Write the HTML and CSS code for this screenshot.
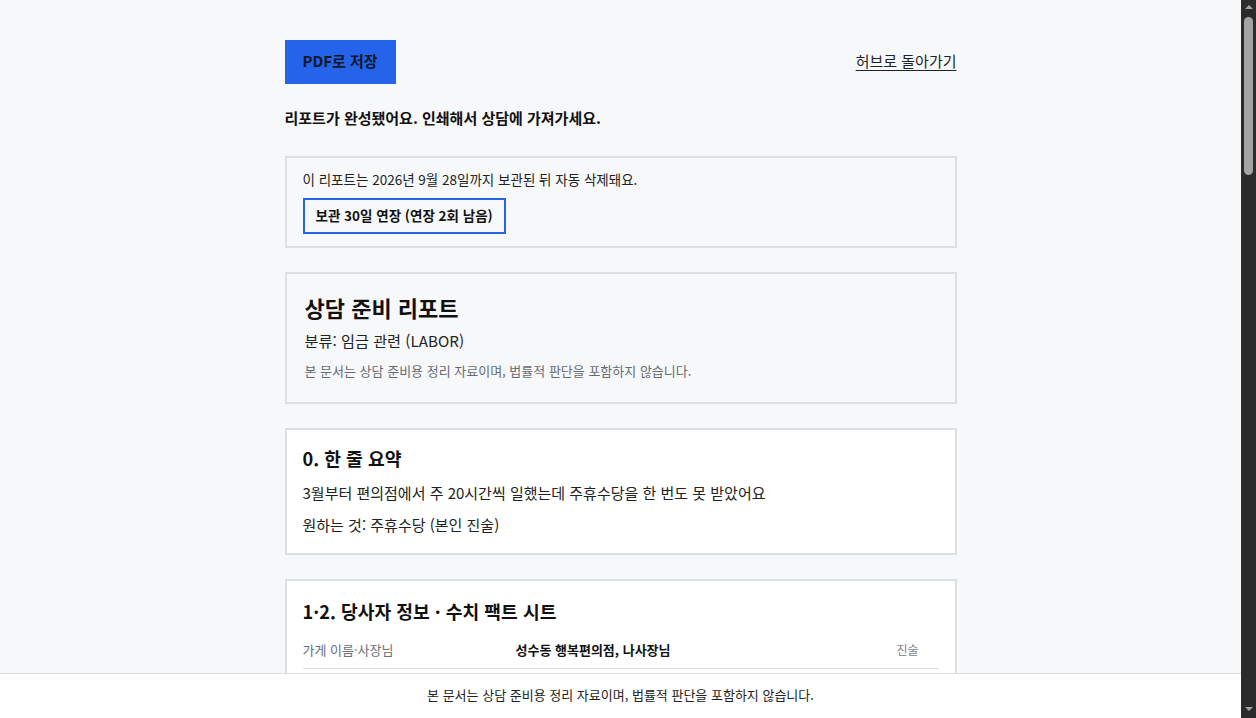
FILE: index.html
```html
<!DOCTYPE html>
<html lang="ko">
<head>
<meta charset="utf-8">
<title>상담 준비 리포트</title>
<link rel="stylesheet" href="styles.css">
</head>
<body>
<main class="page">
  <div class="topbar">
    <button class="btn-primary" type="button">PDF로 저장</button>
    <a class="back-link" href="#">허브로 돌아가기</a>
  </div>

  <p class="done-msg">리포트가 완성됐어요. 인쇄해서 상담에 가져가세요.</p>

  <section class="notice">
    <p class="notice-text">이 리포트는 2026년 9월 28일까지 보관된 뒤 자동 삭제돼요.</p>
    <button class="btn-outline" type="button">보관 30일 연장 (연장 2회 남음)</button>
  </section>

  <section class="card card-head">
    <h1 class="report-title">상담 준비 리포트</h1>
    <p class="report-cat">분류: 임금 관련 (LABOR)</p>
    <p class="report-note">본 문서는 상담 준비용 정리 자료이며, 법률적 판단을 포함하지 않습니다.</p>
  </section>

  <section class="card card-white card-summary">
    <h2 class="sec-title">0. 한 줄 요약</h2>
    <div class="sec-body">
      <p>3월부터 편의점에서 주 20시간씩 일했는데 주휴수당을 한 번도 못 받았어요</p>
      <p>원하는 것: 주휴수당 (본인 진술)</p>
    </div>
  </section>

  <section class="card card-white">
    <h2 class="sec-title">1·2. 당사자 정보 · 수치 팩트 시트</h2>
    <div class="fact-table">
      <div class="fact-row">
        <span class="fact-label">가게 이름·사장님</span>
        <span class="fact-value">성수동 행복편의점, 나사장님</span>
        <span class="fact-src">진술</span>
      </div>
      <div class="fact-row">
        <span class="fact-label">근무 기간</span>
        <span class="fact-value">2025년 3월 ~ 현재</span>
        <span class="fact-src">진술</span>
      </div>
      <div class="fact-row">
        <span class="fact-label">주당 근무 시간</span>
        <span class="fact-value">주 20시간</span>
        <span class="fact-src">진술</span>
      </div>
      <div class="fact-row">
        <span class="fact-label">시급</span>
        <span class="fact-value">10,030원</span>
        <span class="fact-src">진술</span>
      </div>
      <div class="fact-row">
        <span class="fact-label">근로계약서</span>
        <span class="fact-value">작성하지 않음</span>
        <span class="fact-src">진술</span>
      </div>
      <div class="fact-row">
        <span class="fact-label">급여 지급 방식</span>
        <span class="fact-value">매월 10일 계좌이체</span>
        <span class="fact-src">진술</span>
      </div>
      <div class="fact-row">
        <span class="fact-label">미지급 추정 기간</span>
        <span class="fact-value">약 7개월</span>
        <span class="fact-src">계산</span>
      </div>
    </div>
  </section>

  <section class="card card-white">
    <h2 class="sec-title">3. 시간순 경과</h2>
    <div class="sec-body">
      <p>2025년 3월: 편의점 야간 아르바이트 시작</p>
      <p>2025년 6월: 근무 시간이 주 20시간으로 고정됨</p>
      <p>2025년 8월: 사장님께 주휴수당 문의, 답변 없음</p>
      <p>2025년 9월: 급여 명세서 요청, 받지 못함</p>
    </div>
  </section>

  <section class="card card-white">
    <h2 class="sec-title">4. 가지고 있는 자료</h2>
    <div class="sec-body">
      <p>근무 스케줄 사진 (단체 대화방 캡처)</p>
      <p>급여 입금 내역 (통장 거래내역)</p>
      <p>사장님과 주고받은 문자 메시지</p>
    </div>
  </section>

  <section class="card card-white">
    <h2 class="sec-title">5. 상담 때 물어볼 것</h2>
    <div class="sec-body">
      <p>주휴수당을 소급해서 받을 수 있는지</p>
      <p>근로계약서가 없을 때 증빙은 어떻게 하는지</p>
      <p>진정을 넣으면 계속 일할 수 있는지</p>
    </div>
  </section>

  <section class="card card-white">
    <h2 class="sec-title">6. 참고 안내</h2>
    <div class="sec-body">
      <p>이 리포트는 입력하신 내용을 정리한 것이며, 사실 여부를 확인하지 않았습니다.</p>
      <p>정확한 판단은 상담 기관이나 전문가와 상의하세요.</p>
    </div>
  </section>
</main>

<footer class="footer">본 문서는 상담 준비용 정리 자료이며, 법률적 판단을 포함하지 않습니다.</footer>

<div class="scrollbar" aria-hidden="true">
  <span class="sb-arrow sb-up"></span>
  <span class="sb-thumb"></span>
  <span class="sb-arrow sb-down"></span>
</div>
</body>
</html>
```

FILE: styles.css
```css
* { box-sizing: border-box; }

html {
  background: #f7f8fa;
}

body {
  margin: 0;
  background: #f7f8fa;
  font-family: "Noto Sans CJK KR", "Noto Sans", sans-serif;
  color: #1f2328;
  padding: 40px 15px 1300px 0;
}

.page {
  max-width: 672px;
  margin: 0 auto;
  display: flex;
  flex-direction: column;
}

.topbar {
  display: flex;
  justify-content: space-between;
  align-items: center;
}

.btn-primary {
  height: 44px;
  padding: 0 18px 3px;
  border: none;
  background: #2563eb;
  color: #111827;
  font-family: inherit;
  font-size: 15px;
  font-weight: 700;
  cursor: pointer;
}

.back-link {
  color: #1f2328;
  font-size: 15px;
  text-decoration: underline;
  text-underline-offset: 3px;
  line-height: 22px;
  padding-bottom: 3px;
}

.done-msg {
  margin: 23px 0 27px;
  font-size: 15px;
  font-weight: 700;
  line-height: 22px;
  color: #111;
}

.notice {
  border: 2px solid #dcdfe4;
  background: #f7f8fa;
  padding: 11px 16px 12px;
  display: flex;
  flex-direction: column;
  align-items: flex-start;
  gap: 9px;
  margin-bottom: 24px;
}

.notice-text {
  margin: 0;
  font-size: 13.5px;
  line-height: 20px;
  color: #222;
}

.btn-outline {
  height: 36px;
  padding: 0 11px 2px;
  border: 2px solid #2563eb;
  background: transparent;
  font-family: inherit;
  font-size: 13.5px;
  font-weight: 700;
  color: #111;
  cursor: pointer;
}

.card {
  border: 2px solid #dcdfe4;
  margin-bottom: 24px;
}

.card-head {
  background: #f7f8fa;
  padding: 17px 18px 21px;
}

.report-title {
  margin: 0 0 5px;
  font-size: 22px;
  line-height: 32px;
  font-weight: 700;
  color: #111;
}

.report-cat {
  margin: 0 0 9px;
  font-size: 15.2px;
  line-height: 24px;
  color: #222;
}

.report-note {
  margin: 0;
  font-size: 13px;
  line-height: 20px;
  color: #666b73;
}

.card-white {
  background: #fff;
  padding: 16px;
}

.card-summary {
  padding-top: 14px;
}

.card-summary .sec-title {
  margin-bottom: 9px;
}

.sec-title {
  margin: 0 0 7px;
  font-size: 18.2px;
  line-height: 28px;
  font-weight: 700;
  color: #111;
}

.sec-body {
  display: flex;
  flex-direction: column;
  gap: 8px;
}

.sec-body p {
  margin: 0;
  font-size: 15px;
  line-height: 24px;
  color: #222;
}

.fact-table {
  display: flex;
  flex-direction: column;
  margin-top: 4px;
}

.fact-row {
  display: grid;
  grid-template-columns: 213px 1fr 42px;
  padding: 8px 0;
  border-bottom: 1px solid #dcdfe4;
  font-size: 13px;
  line-height: 20px;
}

.fact-label { color: #6b7078; }
.fact-value { font-weight: 700; color: #111; }
.fact-src { font-size: 12px; color: #7a7f87; }

.footer {
  position: fixed;
  left: 0;
  right: 15px;
  bottom: 0;
  background: #fff;
  border-top: 1px solid #d9dce1;
  padding: 11px 16px 13px;
  text-align: center;
  font-size: 13px;
  line-height: 20px;
  color: #222;
}

/* simulated browser scrollbar */
.scrollbar {
  position: fixed;
  top: 0;
  right: 0;
  bottom: 0;
  width: 15px;
  background: #2b2b2b;
  display: flex;
  flex-direction: column;
  align-items: center;
}

.sb-arrow {
  width: 0;
  height: 0;
  border-left: 4px solid transparent;
  border-right: 4px solid transparent;
}

.sb-up {
  margin-top: 5px;
  border-bottom: 4px solid #a3a3a3;
}

.sb-thumb {
  width: 9px;
  height: 158px;
  margin-top: 8px;
  border-radius: 5px;
  background: #a3a3a3;
}

.sb-down {
  margin-top: auto;
  margin-bottom: 7px;
  border-top: 4px solid #a3a3a3;
}
```
